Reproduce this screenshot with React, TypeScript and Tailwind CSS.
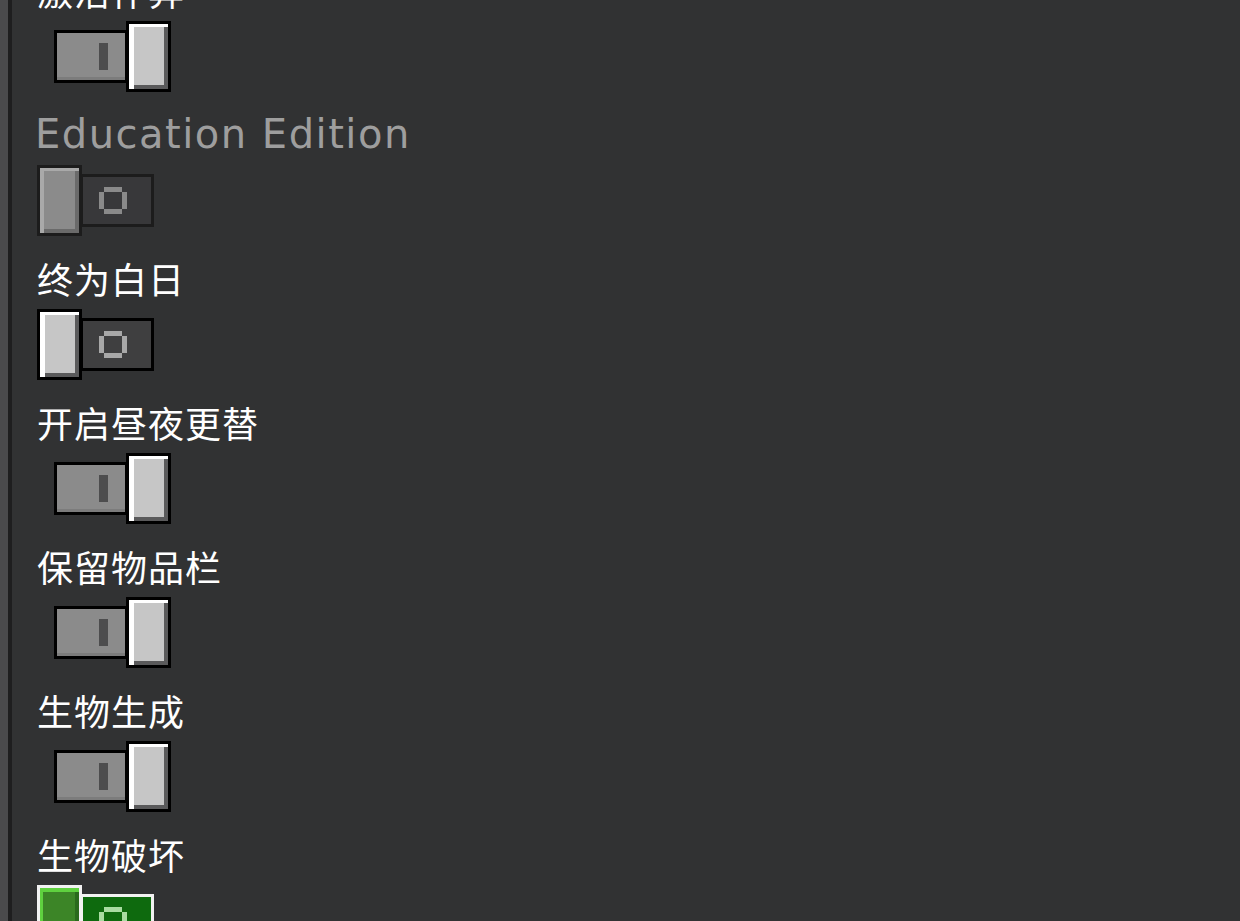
import React from "react";

type ToggleProps = {
  on: boolean;
  disabled?: boolean;
  focused?: boolean;
};

function Ring({ color }: { color: string }) {
  return (
    <svg width="28" height="27" viewBox="0 0 28 27" className="block">
      <rect x="5" y="0" width="18" height="5" fill={color} />
      <rect x="5" y="22" width="18" height="5" fill={color} />
      <rect x="0" y="5" width="5" height="17" fill={color} />
      <rect x="23" y="5" width="5" height="17" fill={color} />
    </svg>
  );
}

function Knob({ disabled, focused }: { disabled?: boolean; focused?: boolean }) {
  let cls =
    "border-black bg-[#c6c6c6] shadow-[inset_5px_3px_0_0_#ffffff,inset_-4px_-4px_0_0_#5a5a5b]";
  if (disabled)
    cls =
      "border-[#1c1c1c] bg-[#8b8b8b] shadow-[inset_4px_3px_0_0_#a9a9a9,inset_-4px_-4px_0_0_#6a6a6a]";
  if (focused)
    cls =
      "border-[#f2f2f2] bg-[#3c8527] shadow-[inset_3px_4px_0_0_#5fd13f,inset_-4px_-4px_0_0_#2a6a1c]";
  return (
    <div className={`relative z-10 w-[45px] h-[71px] shrink-0 border-[3px] ${cls}`} />
  );
}

function Toggle({ on, disabled, focused }: ToggleProps) {
  if (on) {
    return (
      <div className="flex items-start h-[71px] pl-[17px]">
        <div className="mt-[9px] w-[74px] h-[53px] border-[3px] border-black bg-[#8b8b8b] shadow-[inset_0_-3px_0_0_#7c7c7c] pl-[42px] pt-[10px]">
          <div className="w-[9px] h-[27px] bg-[#4d4d4e]" />
        </div>
        <div className="-ml-[2px]">
          <Knob />
        </div>
      </div>
    );
  }

  let track = "border-black bg-[#3f3f40]";
  let ring = "#a8a8a8";
  if (disabled) {
    track = "border-[#1c1c1c] bg-[#38383a]";
    ring = "#8a8a8a";
  }
  if (focused) {
    track = "border-[#f2f2f2] bg-[#0e6a0e]";
    ring = "#a9dca2";
  }

  return (
    <div className="flex items-start h-[71px]">
      <Knob disabled={disabled} focused={focused} />
      <div
        className={`-ml-[2px] mt-[9px] w-[74px] h-[53px] border-[3px] ${track} pl-[16px] pt-[10px]`}
      >
        <Ring color={ring} />
      </div>
    </div>
  );
}

type Setting = {
  label: string;
  latin?: boolean;
  on: boolean;
  disabled?: boolean;
  focused?: boolean;
};

const settings: Setting[] = [
  { label: "激活作弊", on: true },
  { label: "Education Edition", latin: true, on: false, disabled: true },
  { label: "终为白日", on: false },
  { label: "开启昼夜更替", on: true },
  { label: "保留物品栏", on: true },
  { label: "生物生成", on: true },
  { label: "生物破坏", on: false, focused: true },
];

function SettingRow({ s }: { s: Setting }) {
  const labelCls = s.latin
    ? "text-[40px] tracking-[1.5px] -ml-[2px] text-[#9e9e9e] font-['DejaVu_Sans',sans-serif]"
    : "text-[36px] tracking-[1px] text-white font-['Noto_Sans_CJK_SC',sans-serif]";
  return (
    <div className="flex flex-col h-[144px]">
      <div className={`h-[48px] leading-[48px] whitespace-nowrap ${labelCls}`}>
        {s.label}
      </div>
      <div className="mt-[7px]">
        <Toggle on={s.on} disabled={s.disabled} focused={s.focused} />
      </div>
    </div>
  );
}

export default function App() {
  return (
    <div className="w-full h-[921px] overflow-hidden flex bg-[#313233]">
      <div className="w-[8px] shrink-0 bg-[#4a4a4c]" />
      <div className="w-[4px] shrink-0 bg-[#1e1e1f]" />
      <div className="flex-1 pl-[25px]">
        <div className="-mt-[34px] flex flex-col">
          {settings.map((s) => (
            <SettingRow key={s.label} s={s} />
          ))}
        </div>
      </div>
    </div>
  );
}
